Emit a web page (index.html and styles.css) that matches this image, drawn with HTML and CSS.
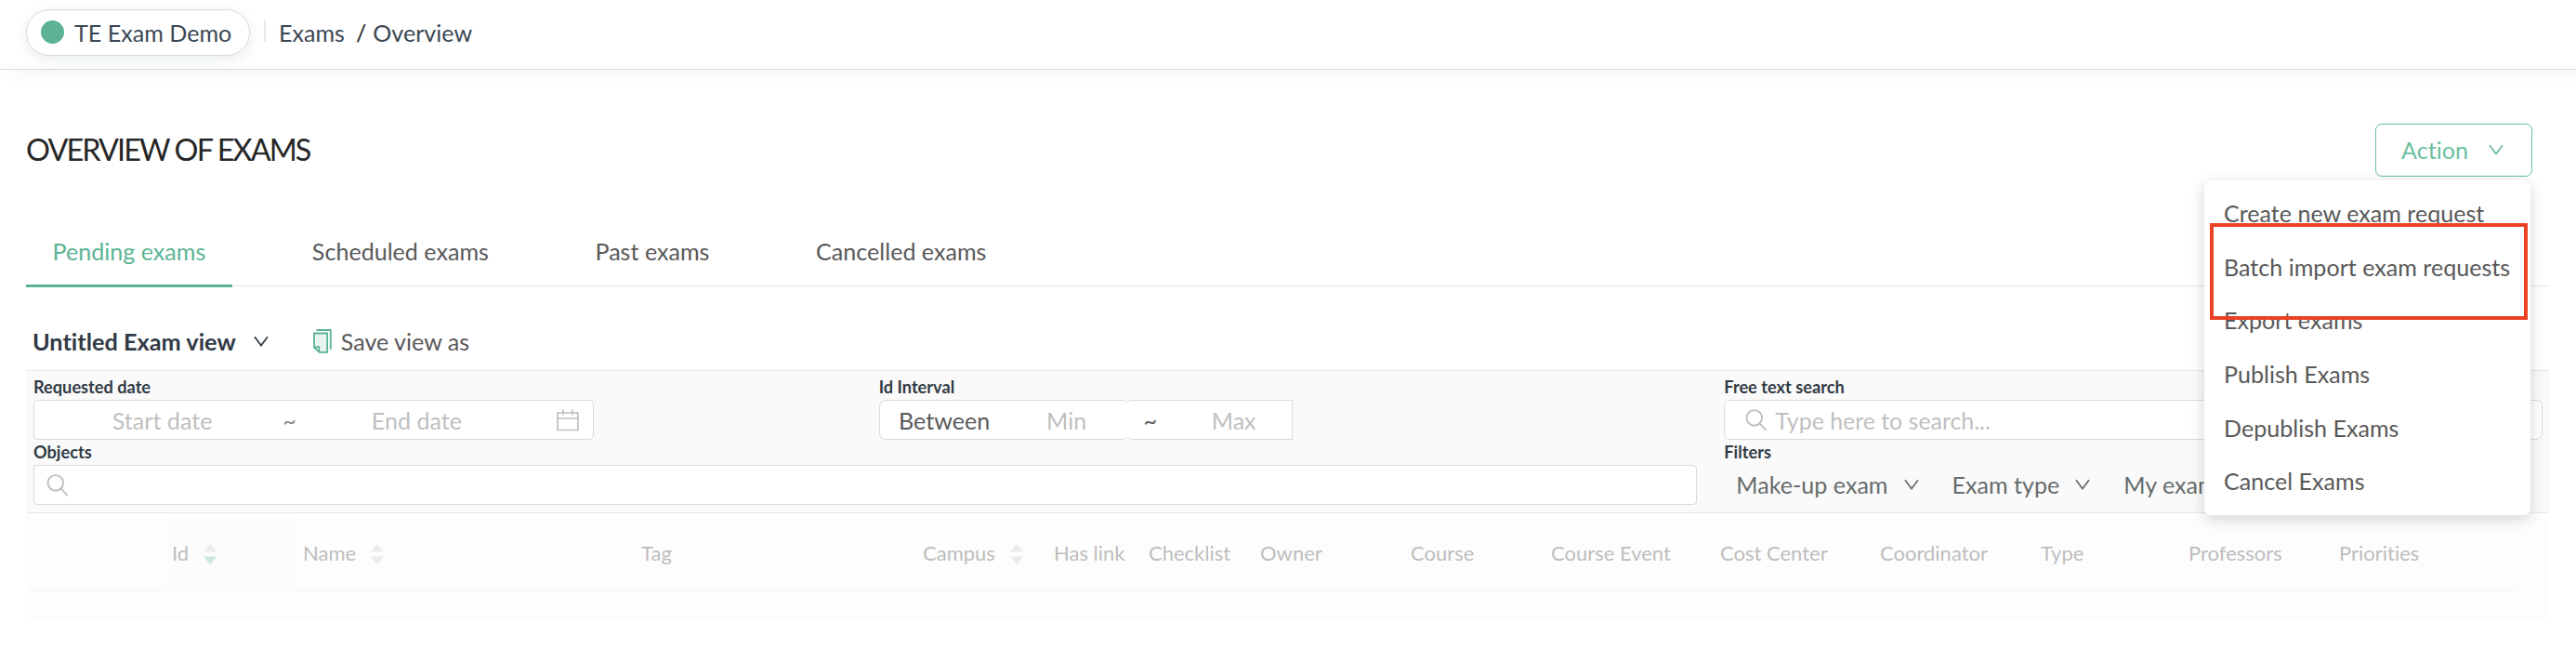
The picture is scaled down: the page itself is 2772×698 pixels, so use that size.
FILE: index.html
```html
<!DOCTYPE html>
<html lang="en">

<head>
    <meta charset="UTF-8">
    <meta name="viewport" content="width=device-width, initial-scale=1.0">
    <link rel="stylesheet" href="styles.css">
    <title>Overview of exams</title>
</head>

<body>
    <header class="topbar">
        <div class="pill"><span class="dot"></span>TE Exam Demo</div>
        <span class="divider"></span>
        <div class="crumbs"><span>Exams</span><span class="slash">/</span><span>Overview</span></div>
    </header>

    <main class="page">
        <div class="title-row">
            <h1>OVERVIEW OF EXAMS</h1>
            <div class="action">
                <button class="action-btn">Action
                    <svg class="chevron" viewBox="0 0 16 12"><path d="M1 1.2L8 10.6L15 1.2" /></svg>
                </button>
                <div class="menu">
                    <div class="menu-item">Create new exam request</div>
                    <div class="menu-item">Batch import exam requests</div>
                    <div class="menu-item">Export exams</div>
                    <div class="menu-item">Publish Exams</div>
                    <div class="menu-item">Depublish Exams</div>
                    <div class="menu-item">Cancel Exams</div>
                    <div class="highlight"></div>
                </div>
            </div>
        </div>

        <nav class="tabs">
            <div class="tab active">Pending exams</div>
            <div class="tab">Scheduled exams</div>
            <div class="tab">Past exams</div>
            <div class="tab">Cancelled exams</div>
        </nav>

        <div class="view-row">
            <span class="view-name">Untitled Exam view</span>
            <svg class="chevron" viewBox="0 0 16 12"><path d="M1 1.2L8 10.6L15 1.2" /></svg>
            <svg class="copy" viewBox="0 0 20 26">
                <path d="M3.5 1H18.8V22" />
                <path class="sheet" d="M1 4.5H15.2V24.8H6.5L1 19.5Z" />
                <path d="M1 19.2H6.3V24.6" />
            </svg>
            <span>Save view as</span>
        </div>

        <section class="filters">
            <div class="field">
                <label>Requested date</label>
                <div class="box date">
                    <span class="date-part">Start date</span>
                    <span class="tilde">~</span>
                    <span class="date-part">End date</span>
                    <svg class="calendar" viewBox="0 0 24 24"><path d="M1.1 4H22.9V22.5H1.1ZM1.1 10H22.9M7 0.5V6.5M17 0.5V6.5" /></svg>
                </div>
            </div>
            <div class="field">
                <label>Id Interval</label>
                <div class="interval">
                    <span class="box between">Between</span>
                    <span class="box min">Min</span>
                    <span class="box sep">~</span>
                    <span class="box max">Max</span>
                </div>
            </div>
            <div class="field">
                <label>Free text search</label>
                <div class="box free">
                    <svg class="search" viewBox="0 0 24 24"><circle cx="9.8" cy="9.4" r="8.3" /><path d="M15.6 15.4L22.6 22.9" /></svg>
                    <span>Type here to search...</span>
                </div>
            </div>
            <div class="field wide">
                <label>Objects</label>
                <div class="box objects">
                    <svg class="search" viewBox="0 0 24 24"><circle cx="9.8" cy="9.4" r="8.3" /><path d="M15.6 15.4L22.6 22.9" /></svg>
                </div>
            </div>
            <div class="field">
                <label>Filters</label>
                <div class="selects">
                    <span>Make-up exam</span>
                    <svg class="chevron" viewBox="0 0 16 12"><path d="M1 1.2L8 10.6L15 1.2" /></svg>
                    <span>Exam type</span>
                    <svg class="chevron" viewBox="0 0 16 12"><path d="M1 1.2L8 10.6L15 1.2" /></svg>
                    <span>My exams</span>
                </div>
            </div>
        </section>

        <div class="table">
            <div class="thead">
                <div></div>
                <div class="sorted">Id <svg class="sorter" viewBox="0 0 14 22"><path d="M7 0L14 8.5H0Z" /><path class="on" d="M0 13.5H14L7 22Z" /></svg></div>
                <div>Name <svg class="sorter" viewBox="0 0 14 22"><path d="M7 0L14 8.5H0Z" /><path d="M0 13.5H14L7 22Z" /></svg></div>
                <div>Tag</div>
                <div>Campus <svg class="sorter" viewBox="0 0 14 22"><path d="M7 0L14 8.5H0Z" /><path d="M0 13.5H14L7 22Z" /></svg></div>
                <div>Has link</div>
                <div>Checklist</div>
                <div>Owner</div>
                <div>Course</div>
                <div>Course Event</div>
                <div>Cost Center</div>
                <div>Coordinator</div>
                <div>Type</div>
                <div>Professors</div>
                <div>Priorities</div>
                <div class="gutter"></div>
            </div>
            <div class="trow"></div>
        </div>
    </main>
</body>

</html>
```
FILE: styles.css
```css
* {
    box-sizing: border-box;
}

body {
    margin: 0;
    background: #fff;
    color: #595959;
    font-family: Lato, sans-serif;
    font-size: 25.1px;
    font-variant-ligatures: none;
    line-height: 30px;
}

svg {
    display: block;
    flex: none;
    fill: none;
    stroke: currentColor;
}

.topbar {
    display: flex;
    align-items: center;
    height: 75px;
    padding: 0 28px 4px;
    border-bottom: 1px solid #d6dbda;
    box-shadow: 14px 7px 18px rgba(0, 0, 0, 0.04);
    color: #3b4754;
}

.pill {
    display: flex;
    align-items: center;
    width: 241px;
    height: 50px;
    padding: 0 0 1px 15px;
    border: 1px solid #d5dbda;
    border-radius: 25px;
    box-shadow: 0 4px 14px rgba(60, 110, 90, 0.12);
}

.dot {
    width: 25px;
    height: 25px;
    margin-right: 11px;
    border-radius: 50%;
    background: #5bb394;
}

.divider {
    width: 2px;
    height: 23px;
    margin: 0 14px 3px 15px;
    background: #e6e8e8;
}

.crumbs {
    display: flex;
}

.slash {
    margin: 0 7px 0 12px;
    color: #262626;
}

.page {
    padding: 58px 29px 0 28px;
}

.title-row {
    display: flex;
    justify-content: space-between;
    align-items: center;
    height: 57px;
    padding-right: 18px;
}

h1 {
    margin: 0 0 2px;
    font-size: 32.4px;
    font-weight: 400;
    letter-spacing: -1.9px;
    color: #262626;
}

.action {
    position: relative;
}

.action-btn {
    display: flex;
    align-items: center;
    width: 169px;
    height: 57px;
    padding: 0 0 1px 27px;
    border: 1px solid #6cc0a0;
    border-radius: 7px;
    background: #fff;
    color: #6cc0a0;
    font: inherit;
}

.chevron {
    width: 16px;
    height: 12px;
    margin-left: 19px;
    stroke-width: 1.7;
}

.action-btn .chevron {
    margin-left: 22px;
}

.menu {
    position: absolute;
    top: 61px;
    right: 2px;
    z-index: 2;
    width: 351px;
    height: 360px;
    padding: 7.2px 0;
    border-radius: 7px;
    background: #fff;
    box-shadow: 0 4px 16px rgba(0, 0, 0, 0.17);
}

.menu-item {
    height: 57.6px;
    padding-left: 21px;
    line-height: 57px;
    white-space: nowrap;
}

.highlight {
    position: absolute;
    left: 6px;
    top: 46px;
    width: 342px;
    height: 104px;
    border: 4px solid #eb4226;
}

.tabs {
    display: flex;
    gap: 57.6px;
    height: 68px;
    margin-top: 50px;
    border-bottom: 1px solid #e6e6e6;
}

.tab {
    height: 69px;
    padding: 15px 28.5px 0;
}

.tab.active {
    border-bottom: 3px solid #5bb394;
    color: #5bb394;
}

.view-row {
    display: flex;
    align-items: center;
    height: 90px;
    padding: 28px 0 0 7px;
}

.view-name {
    font-size: 25.3px;
    font-weight: 700;
    color: #303a44;
}

.view-row .chevron {
    color: #303a44;
}

.copy {
    width: 20px;
    height: 26px;
    margin: 0 10px 0 48px;
    stroke: #5bb394;
    stroke-width: 1.8;
}

.copy .sheet {
    fill: #e9f3ef;
}

.filters {
    display: grid;
    grid-template-columns: repeat(3, 1fr);
    column-gap: 29px;
    height: 154px;
    padding: 4px 7px 8px 8px;
    border-top: 1px solid #e6e6e6;
    border-bottom: 1px solid #e6e6e6;
    background: #fafafa;
}

.field.wide {
    grid-column: span 2;
}

label {
    display: block;
    height: 27px;
    font-size: 18.2px;
    font-weight: 700;
    line-height: 26px;
    color: #303a44;
}

.box {
    display: flex;
    align-items: center;
    height: 43px;
    border: 1px solid #d9d9d9;
    border-radius: 5px;
    background: #fff;
    color: #bfbfbf;
}

.date {
    width: 603px;
    padding: 0 15px 0 8px;
}

.date-part {
    flex: 1;
    text-align: center;
}

.tilde {
    color: #8c8c8c;
}

.calendar {
    width: 24px;
    height: 24px;
    margin-left: 21px;
    color: #bfbfbf;
    stroke-width: 1.7;
}

.interval {
    display: flex;
}

.interval .box {
    justify-content: center;
}

.interval .between {
    width: 141px;
    padding-right: 1px;
    border-right: 0;
    border-radius: 7px 0 0 7px;
    color: #595959;
}

.interval .min {
    width: 126px;
    padding-right: 4px;
    border-width: 1px 0;
    border-radius: 0 5px 5px 0;
}

.interval .sep {
    width: 54px;
    padding-right: 4px;
    border-width: 1px 0;
    border-radius: 5px 0 0 5px;
    color: #595959;
}

.interval .max {
    width: 124px;
    padding-right: 1px;
    border-left: 0;
    border-radius: 0;
}

.free {
    padding-left: 22px;
    border-radius: 7px;
    font-size: 24.9px;
}

.search {
    width: 24px;
    height: 24px;
    margin-right: 8px;
    color: #bfbfbf;
    stroke-width: 1.9;
}

.objects {
    padding-left: 13px;
    border-radius: 4px;
}

.selects {
    display: flex;
    align-items: center;
    height: 43px;
    padding: 0 0 1px 13px;
    color: #666c6c;
}

.selects .chevron {
    margin: 0 36px 0 17px;
}

.table {
    margin-top: 4px;
    color: #bdbdbd;
    font-size: 22px;
}

.thead {
    display: grid;
    grid-template-columns: 149px 141px 364px 303px 141px 102px 120px 162px 151px 182px 172px 173px 159px 162px 202px 32px;
    height: 80px;
    background: #fdfdfd;
}

.thead > div {
    display: flex;
    align-items: center;
    padding: 0 0 1px 8px;
    border-bottom: 1px solid #f6f6f6;
}

.thead .sorted {
    background: #fcfcfc;
}

.thead .gutter {
    border-bottom: 0;
}

.sorter {
    width: 14px;
    height: 22px;
    margin: 2px 0 0 16px;
    fill: #ebebeb;
    stroke: none;
}

.sorter .on {
    fill: #cbe8dd;
}

.trow {
    height: 31px;
    border-bottom: 1px solid #f6f6f6;
    background: #fdfdfd;
}
```
